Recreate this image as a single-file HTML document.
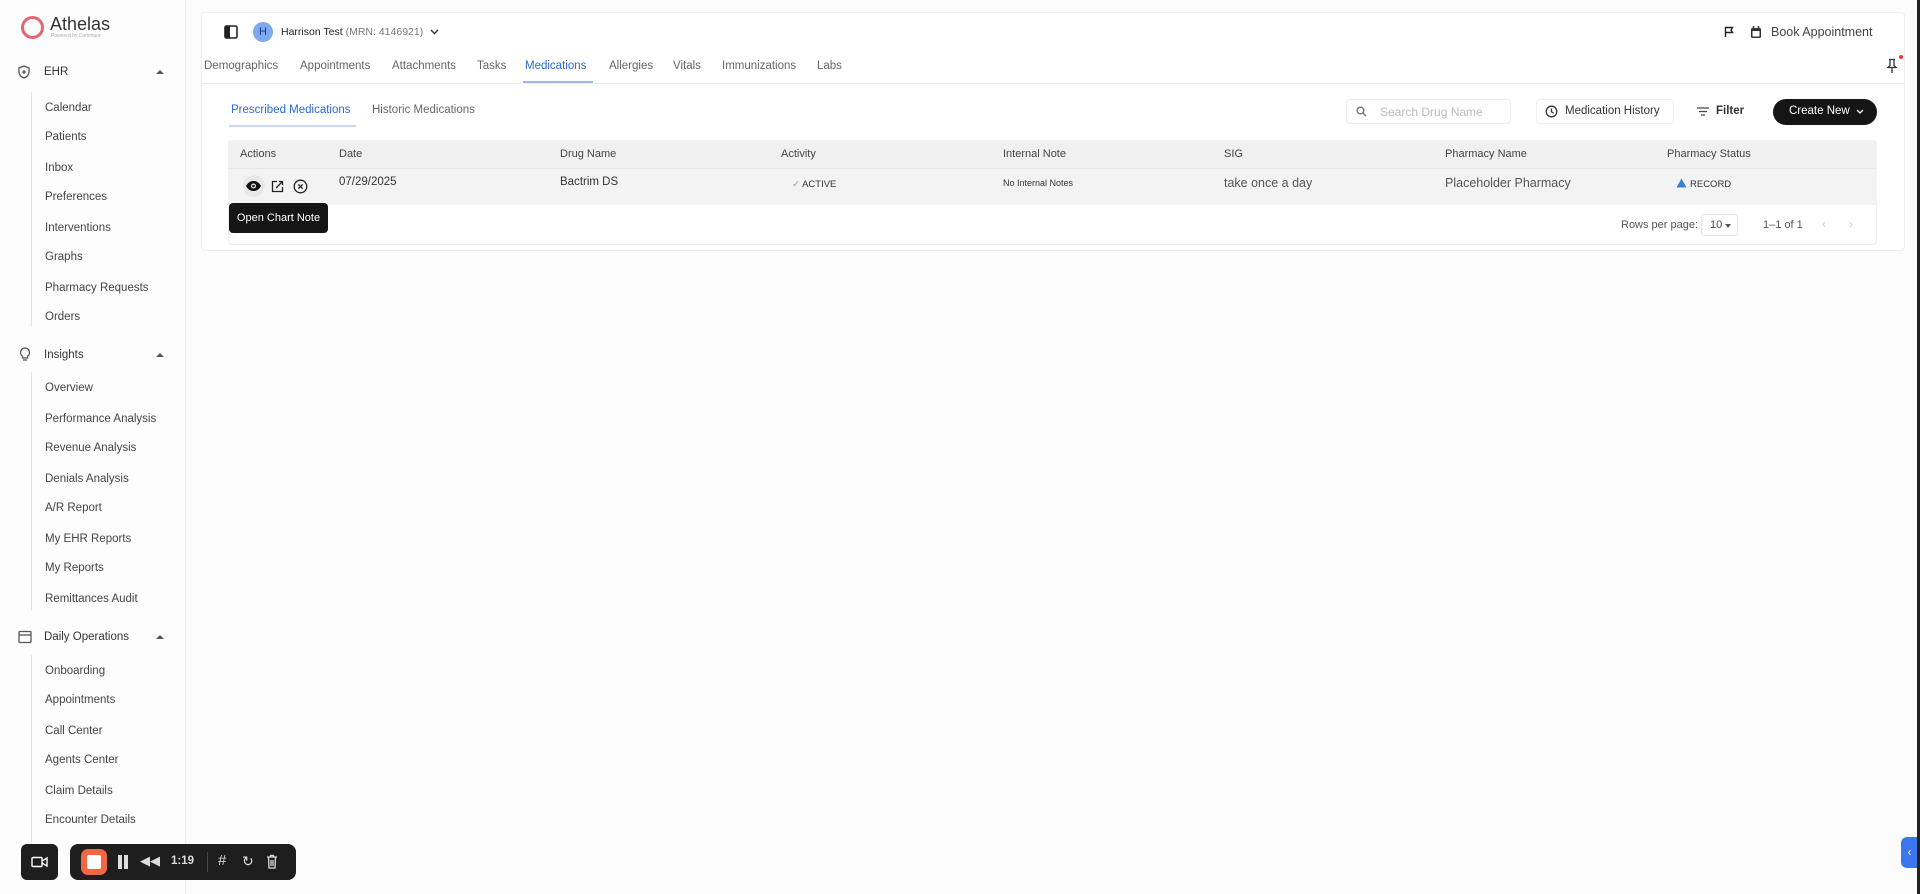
<!DOCTYPE html>
<html><head><meta charset="utf-8"><style>
*{box-sizing:border-box;margin:0;padding:0}
body{width:1920px;height:894px;background:#fcfcfc;font-family:"Liberation Sans",sans-serif;color:#333;position:relative;overflow:hidden;font-size:12px}
.a{position:absolute;white-space:nowrap}
.side{position:absolute;left:0;top:0;width:186px;height:894px;background:#fdfdfd;border-right:1px solid #eee}
.si{position:absolute;left:45px;font-size:11.5px;color:#444;transform:translateY(-50%)}
.sh{position:absolute;left:44px;font-size:11.5px;color:#333;transform:translateY(-50%)}
.caret{position:absolute;left:156px;width:0;height:0;border-left:4px solid transparent;border-right:4px solid transparent;border-bottom:4px solid #555}
.vl{position:absolute;left:31px;width:1px;background:#e4e4e4}
.tab{position:absolute;top:60px;font-size:11.5px;color:#666}
.th{position:absolute;top:148px;font-size:11px;color:#444}
.td{position:absolute;top:176px;font-size:11.5px;color:#333}
</style></head><body>
<div class="side">
 <div class="a" style="left:21px;top:16px;width:23px;height:23px;border:3.5px solid #e8636f;border-radius:50%"></div>
 <div class="a" style="left:50px;top:14px;font-size:18px;color:#333">Athelas</div>
 <div class="a" style="left:51px;top:33px;font-size:5px;color:#aaa">Powered by Commure</div>
 <svg class="a" style="left:17px;top:65px" width="14" height="14" viewBox="0 0 14 14" fill="none" stroke="#555" stroke-width="1.3"><path d="M7 1l5 2v4c0 3-2.5 5-5 6-2.5-1-5-3-5-6V3z"/><path d="M7 5v4M5 7h4"/></svg>
 <div class="sh" style="top:72px">EHR</div><div class="caret" style="top:70px"></div>
 <div class="vl" style="top:92px;height:235px"></div>
 <div class="si" style="top:108px">Calendar</div><div class="si" style="top:137px">Patients</div><div class="si" style="top:168px">Inbox</div><div class="si" style="top:197px">Preferences</div><div class="si" style="top:228px">Interventions</div><div class="si" style="top:257px">Graphs</div><div class="si" style="top:288px">Pharmacy Requests</div><div class="si" style="top:317px">Orders</div>
 <svg class="a" style="left:19px;top:347px" width="12" height="15" viewBox="0 0 12 15" fill="none" stroke="#555" stroke-width="1.3"><path d="M6 1a4.5 4.5 0 0 0-2.5 8.2V11h5V9.2A4.5 4.5 0 0 0 6 1zM4 13h4"/></svg>
 <div class="sh" style="top:355px">Insights</div><div class="caret" style="top:353px"></div>
 <div class="vl" style="top:372px;height:238px"></div>
 <div class="si" style="top:388px">Overview</div><div class="si" style="top:419px">Performance Analysis</div><div class="si" style="top:448px">Revenue Analysis</div><div class="si" style="top:479px">Denials Analysis</div><div class="si" style="top:508px">A/R Report</div><div class="si" style="top:539px">My EHR Reports</div><div class="si" style="top:568px">My Reports</div><div class="si" style="top:599px">Remittances Audit</div>
 <svg class="a" style="left:18px;top:630px" width="14" height="14" viewBox="0 0 14 14" fill="none" stroke="#555" stroke-width="1.3"><rect x="1" y="1.5" width="12" height="11" rx="1"/><path d="M1 5h12"/></svg>
 <div class="sh" style="top:637px">Daily Operations</div><div class="caret" style="top:635px"></div>
 <div class="vl" style="top:655px;height:200px"></div>
 <div class="si" style="top:671px">Onboarding</div><div class="si" style="top:700px">Appointments</div><div class="si" style="top:731px">Call Center</div><div class="si" style="top:760px">Agents Center</div><div class="si" style="top:791px">Claim Details</div><div class="si" style="top:820px">Encounter Details</div>
</div>

<div class="a" style="left:201px;top:12px;width:1704px;height:239px;background:#fff;border:1px solid #eee;border-radius:4px"></div>
<div class="a" style="left:201px;top:83px;width:1704px;height:1px;background:#eee"></div>
<svg class="a" style="left:224px;top:25px" width="14" height="14" viewBox="0 0 14 14"><rect x="1" y="1" width="12" height="12" rx="1.5" fill="none" stroke="#222" stroke-width="1.6"/><rect x="1" y="1" width="5" height="12" fill="#222"/></svg>
<div class="a" style="left:253px;top:22px;width:20px;height:20px;border-radius:50%;background:#7fa9ee;color:#1a3e7a;font-size:11px;text-align:center;line-height:20px">H</div>
<div class="a" style="left:281px;top:26px;font-size:10.5px;color:#222">Harrison Test <span style="color:#777">(MRN: 4146921)</span></div>
<svg class="a" style="left:430px;top:29px" width="9" height="6" viewBox="0 0 9 6"><path d="M1 1l3.5 3.5L8 1" fill="none" stroke="#333" stroke-width="1.4"/></svg>
<div class="tab" style="left:204px">Demographics</div><div class="tab" style="left:300px">Appointments</div><div class="tab" style="left:392px">Attachments</div><div class="tab" style="left:477px">Tasks</div><div class="tab" style="left:525px;color:#2a6bd4">Medications</div><div class="tab" style="left:609px">Allergies</div><div class="tab" style="left:673px">Vitals</div><div class="tab" style="left:722px">Immunizations</div><div class="tab" style="left:817px">Labs</div>
<div class="a" style="left:523px;top:81px;width:70px;height:2px;background:#9ab8ee"></div>
<svg class="a" style="left:1724px;top:26px" width="11" height="12" viewBox="0 0 11 12"><path d="M1.5 11V1.5h7l-1.5 2.5 1.5 2.5h-7" fill="none" stroke="#222" stroke-width="1.4"/></svg>
<svg class="a" style="left:1750px;top:25px" width="12" height="14" viewBox="0 0 12 14"><rect x="1" y="3" width="10" height="10" rx="1.5" fill="#333"/><rect x="2.5" y="6" width="7" height="5.5" fill="#fff"/><path d="M3.5 1v3M8.5 1v3" stroke="#333" stroke-width="1.5"/></svg>
<div class="a" style="left:1771px;top:25px;font-size:12.5px;color:#444">Book Appointment</div>
<svg class="a" style="left:1886px;top:58px" width="12" height="16" viewBox="0 0 12 16"><path d="M3 1.5h6M4 1.5v6L2 9.5h8L8 7.5v-6M6 9.5V15" fill="none" stroke="#333" stroke-width="1.3"/></svg>
<div class="a" style="left:1899px;top:55px;width:4px;height:4px;border-radius:50%;background:#e33"></div>

<div class="a" style="left:231px;top:104px;font-size:11.5px;color:#2a6bd4">Prescribed Medications</div>
<div class="a" style="left:229px;top:125px;width:127px;height:2px;background:#c7d6f3"></div>
<div class="a" style="left:372px;top:104px;font-size:11.5px;color:#666">Historic Medications</div>

<div class="a" style="left:1346px;top:99px;width:165px;height:25px;border:1px solid #eee;border-radius:4px"></div>
<svg class="a" style="left:1356px;top:106px" width="11" height="11" viewBox="0 0 11 11"><circle cx="4.5" cy="4.5" r="3.3" fill="none" stroke="#777" stroke-width="1.4"/><path d="M7 7l3 3" stroke="#777" stroke-width="1.5"/></svg>
<div class="a" style="left:1380px;top:105px;font-size:12px;color:#bbb">Search Drug Name</div>
<div class="a" style="left:1536px;top:99px;width:138px;height:25px;border:1px solid #f0f0f0;border-radius:4px"></div>
<svg class="a" style="left:1545px;top:105px" width="13" height="13" viewBox="0 0 13 13"><circle cx="6.5" cy="6.5" r="5.3" fill="none" stroke="#333" stroke-width="1.3"/><path d="M6.5 3.5v3.3l2 1.3" fill="none" stroke="#333" stroke-width="1.3"/></svg>
<div class="a" style="left:1565px;top:105px;font-size:11.5px;color:#333">Medication History</div>
<svg class="a" style="left:1697px;top:107px" width="12" height="9" viewBox="0 0 12 9"><path d="M0 1h12M2 4.5h8M4 8h4" stroke="#444" stroke-width="1.2"/></svg>
<div class="a" style="left:1716px;top:105px;font-size:11.5px;color:#333;font-weight:bold">Filter</div>
<div class="a" style="left:1773px;top:99px;width:104px;height:26px;background:#151515;border-radius:13px"></div>
<div class="a" style="left:1789px;top:105px;font-size:11.5px;color:#fff">Create New</div>
<svg class="a" style="left:1856px;top:109px" width="8" height="6" viewBox="0 0 8 6"><path d="M1 1l3 3 3-3" fill="none" stroke="#fff" stroke-width="1.3"/></svg>

<div class="a" style="left:228px;top:140px;width:1649px;height:105px;border:1px solid #eee;border-radius:4px;background:#fff"></div>
<div class="a" style="left:228px;top:140px;width:1649px;height:28px;background:#f0f0f0;border-radius:4px 4px 0 0"></div>
<div class="a" style="left:228px;top:168px;width:1649px;height:37px;background:#f3f3f3;border-top:1px solid #e8e8e8"></div>
<div class="th" style="left:240px">Actions</div><div class="th" style="left:339px">Date</div><div class="th" style="left:560px">Drug Name</div><div class="th" style="left:781px">Activity</div><div class="th" style="left:1003px">Internal Note</div><div class="th" style="left:1224px">SIG</div><div class="th" style="left:1445px">Pharmacy Name</div><div class="th" style="left:1667px">Pharmacy Status</div>
<div class="a" style="left:243px;top:175px;width:22px;height:22px;border-radius:50%;background:#e8e8e8"></div>
<svg class="a" style="left:245px;top:180px" width="17" height="12" viewBox="0 0 17 12"><path d="M1 6c2-3.5 4.5-5 7.5-5s5.5 1.5 7.5 5c-2 3.5-4.5 5-7.5 5S3 9.5 1 6z" fill="#111"/><circle cx="8.5" cy="6" r="2.5" fill="#f0f0f0"/><circle cx="8.5" cy="6" r="1.3" fill="#111"/></svg>
<svg class="a" style="left:271px;top:180px" width="13" height="13" viewBox="0 0 13 13" fill="none" stroke="#222" stroke-width="1.3"><path d="M6 1.5H1.5v10h10V7"/><path d="M5 8l6.5-6.5M8 1.5h3.5V5"/></svg>
<svg class="a" style="left:293px;top:179px" width="15" height="15" viewBox="0 0 15 15" fill="none" stroke="#222" stroke-width="1.3"><circle cx="7.5" cy="7.5" r="6.3"/><path d="M5.3 5.3l4.4 4.4M9.7 5.3l-4.4 4.4"/></svg>
<div class="td" style="left:339px">07/29/2025</div><div class="td" style="left:560px">Bactrim DS</div>
<div class="a" style="left:792px;top:179px;font-size:9.5px;color:#333"><span style="color:#999">✓</span> ACTIVE</div>
<div class="a" style="left:1003px;top:178px;font-size:9px;color:#333">No Internal Notes</div>
<div class="td" style="left:1224px;font-size:12.5px;color:#555">take once a day</div>
<div class="td" style="left:1445px;font-size:12.5px;color:#555">Placeholder Pharmacy</div>
<svg class="a" style="left:1676px;top:178px" width="11" height="10" viewBox="0 0 11 10"><path d="M5.5 0.5L10.5 9.5H0.5z" fill="#3a7fd0"/></svg>
<div class="a" style="left:1690px;top:179px;font-size:9.5px;color:#333">RECORD</div>
<div class="a" style="left:229px;top:203px;width:99px;height:30px;background:#151515;border-radius:4px;color:#fff;font-size:11px;line-height:30px;text-align:center">Open Chart Note</div>
<div class="a" style="left:1621px;top:219px;font-size:11px;color:#555">Rows per page:</div>
<div class="a" style="left:1701px;top:214px;width:37px;height:22px;border:1px solid #e5e5e5;border-radius:3px;font-size:11px;padding:4px 0 0 8px;color:#444">10</div>
<div class="a" style="left:1725px;top:224px;border-left:3px solid transparent;border-right:3px solid transparent;border-top:4px solid #555"></div>
<div class="a" style="left:1763px;top:219px;font-size:11px;color:#555">1–1 of 1</div>
<div class="a" style="left:1822px;top:217px;font-size:12px;color:#ccc">‹</div><div class="a" style="left:1849px;top:217px;font-size:12px;color:#ccc">›</div>

<div class="a" style="left:21px;top:844px;width:37px;height:36px;background:#1e1e1e;border-radius:6px"></div>
<svg class="a" style="left:31px;top:856px" width="17" height="12" viewBox="0 0 17 12" fill="none" stroke="#fff" stroke-width="1.4"><rect x="1" y="1.5" width="10" height="9" rx="1"/><path d="M11 5l5-3v8l-5-3"/></svg>
<div class="a" style="left:70px;top:844px;width:226px;height:36px;background:#1e1e1e;border-radius:8px"></div>
<div class="a" style="left:81px;top:849px;width:26px;height:26px;background:#ef6842;border-radius:7px"></div>
<div class="a" style="left:87px;top:855px;width:14px;height:14px;background:#fff;border-radius:2px"></div>
<div class="a" style="left:118px;top:855px;width:4px;height:14px;background:#ddd"></div><div class="a" style="left:124px;top:855px;width:4px;height:14px;background:#ddd"></div>
<div class="a" style="left:140px;top:853px;font-size:13px;color:#ddd">◀◀</div>
<div class="a" style="left:171px;top:855px;font-size:11.5px;color:#ddd;font-weight:bold">1:19</div>
<div class="a" style="left:207px;top:852px;width:1px;height:20px;background:#444"></div>
<div class="a" style="left:218px;top:852px;font-size:15px;color:#ddd">#</div>
<div class="a" style="left:242px;top:853px;font-size:14px;color:#ddd">↻</div>
<svg class="a" style="left:266px;top:854px" width="12" height="15" viewBox="0 0 12 15" fill="none" stroke="#ddd" stroke-width="1.3"><path d="M1 3h10M4.5 3V1.5h3V3M2.5 3l.5 11h6l.5-11M5 6v6M7 6v6"/></svg>

<div class="a" style="left:1901px;top:837px;width:17px;height:31px;background:#3b76f0;border-radius:6px 0 0 6px;color:#fff;font-size:12px;text-align:center;line-height:30px">‹</div>
<div class="a" style="left:1917px;top:0;width:3px;height:894px;background:#222"></div>
</body></html>
